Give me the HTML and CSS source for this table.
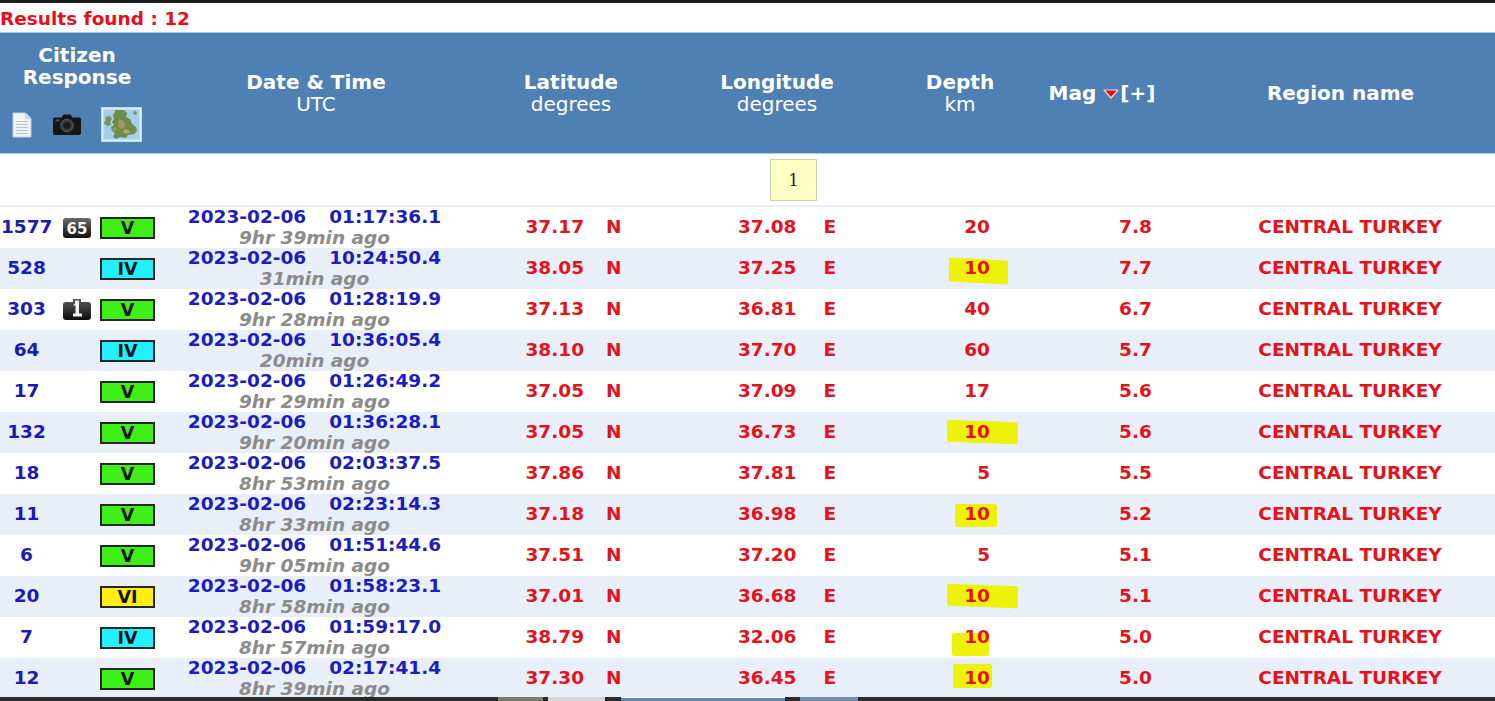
FILE: index.html
```html
<!DOCTYPE html>
<html lang="en">
<head>
<meta charset="utf-8">
<title>Results found : 12</title>
<link rel="stylesheet" href="styles.css">
</head>
<body>
<div class="topbar"></div>
<div class="results">Results found : 12</div>

<div class="thead grid">
  <div class="th th-citizen">
    <div class="th-title">Citizen<br>Response</div>
    <div class="th-icons">
      <svg class="ic-doc" width="20" height="26" viewBox="0 0 20 26"><path d="M1 1h12.5l5.5 5.5V25H1z" fill="#eef3f8" stroke="#c3d0dc"/><path d="M13.5 1v5.5H19" fill="#d3dde8" stroke="#c3d0dc"/><g stroke="#b6c3cf" stroke-width="1"><line x1="4" y1="9.5" x2="16" y2="9.5"/><line x1="4" y1="12.5" x2="16" y2="12.5"/><line x1="4" y1="15.5" x2="16" y2="15.5"/><line x1="4" y1="18.5" x2="16" y2="18.5"/><line x1="4" y1="21.5" x2="16" y2="21.5"/></g></svg>
      <svg class="ic-cam" width="28" height="21" viewBox="0 0 28 21"><path d="M8.5 3.5 10.5 0.5h7l2 3H26a2 2 0 0 1 2 2V19a2 2 0 0 1-2 2H2a2 2 0 0 1-2-2V5.5a2 2 0 0 1 2-2z" fill="#161616"/><circle cx="14" cy="11.5" r="6.2" fill="#3c3c3c" stroke="#5a5a5a"/><circle cx="14" cy="11.5" r="3.6" fill="#1c1c1c"/><rect x="2.5" y="5.5" width="4" height="2" fill="#4a4a4a"/></svg>
      <svg class="ic-map" width="41" height="35" viewBox="0 0 41 35"><rect x="0.5" y="0.5" width="40" height="34" fill="#dcedf8" stroke="#bcdcef"/><rect x="2.5" y="2.5" width="36" height="30" fill="#a3cfe9"/><path d="M14 3h9l3 3-1 4 4 2 2 5 4 3 1 4-3 3-6 1-2 3-6-1-4 2-3-2 2-4-3-2-1-4 3-2-2-3 2-3-1-4 2-3z" fill="#6f8b48"/><path d="M4 10l5-1 2 3-2 3 1 3-4 1-3-3 2-3z" fill="#7c9452"/><path d="M18 12l5 2 1 5-3 3-4-2 0-4z" fill="#a3975f"/><path d="M24 22l4 1 1 3-4 1-3-2z" fill="#b3a46d"/><path d="M12 20l4 1-1 3-4 0z" fill="#94915a"/><path d="M33 4l3 1-1 3-3-1z" fill="#7c9452"/></svg>
    </div>
  </div>
  <div class="th th-date"><b>Date &amp; Time</b><br>UTC</div>
  <div class="th th-lat"><b>Latitude</b><br>degrees</div>
  <div class="th th-lon"><b>Longitude</b><br>degrees</div>
  <div class="th th-depth"><b>Depth</b><br>km</div>
  <div class="th th-mag"><b>Mag</b> <svg class="ic-sort" width="16" height="10" viewBox="0 0 16 10"><path d="M1 1h14L8 9z" fill="#e0101c" stroke="#f4d4d8" stroke-width="1.2" stroke-linejoin="round"/></svg><b>[+]</b></div>
  <div class="th th-region"><b>Region name</b></div>
</div>

<div class="pager"><span class="page">1</span></div>

<div class="row grid">
  <div class="c-num">1577</div>
  <div class="c-icon"><svg width="28" height="20" viewBox="0 0 28 20"><defs><linearGradient id="g65" x1="0" y1="0" x2="0" y2="1"><stop offset="0" stop-color="#6a6a6a"/><stop offset="1" stop-color="#101010"/></linearGradient></defs><rect x="0" y="0" width="28" height="20" rx="3" fill="url(#g65)"/><text x="14" y="15.5" text-anchor="middle" font-family="DejaVu Sans" font-weight="bold" font-size="15" fill="#f4f4f4">65</text></svg></div>
  <div class="c-badge"><span class="badge b-v">V</span></div>
  <div class="c-date"><div class="dt"><span>2023-02-06</span><span class="tm">01:17:36.1</span></div><div class="ago">9hr 39min ago</div></div>
  <div class="c-lat">37.17<span class="hemi">N</span></div>
  <div class="c-lon">37.08<span class="hemi">E</span></div>
  <div class="c-depth"><span>20</span></div>
  <div class="c-mag">7.8</div>
  <div class="c-region">CENTRAL TURKEY</div>
</div>

<div class="row grid alt">
  <div class="c-num">528</div>
  <div class="c-icon"></div>
  <div class="c-badge"><span class="badge b-iv">IV</span></div>
  <div class="c-date"><div class="dt"><span>2023-02-06</span><span class="tm">10:24:50.4</span></div><div class="ago">31min ago</div></div>
  <div class="c-lat">38.05<span class="hemi">N</span></div>
  <div class="c-lon">37.25<span class="hemi">E</span></div>
  <div class="c-depth"><span class="hl hl-a">10</span></div>
  <div class="c-mag">7.7</div>
  <div class="c-region">CENTRAL TURKEY</div>
</div>

<div class="row grid">
  <div class="c-num">303</div>
  <div class="c-icon"><svg width="28" height="21" viewBox="0 0 28 21"><defs><linearGradient id="g1" x1="0" y1="0" x2="0" y2="1"><stop offset="0" stop-color="#5a5a5a"/><stop offset="1" stop-color="#0e0e0e"/></linearGradient></defs><path d="M3 3h7V0h8v3h7a3 3 0 0 1 3 3v12a3 3 0 0 1-3 3H3a3 3 0 0 1-3-3V6a3 3 0 0 1 3-3z" fill="url(#g1)"/><path d="M12 1.5h4v13h3v3h-9v-3h2.5V6.5H10l2-2z" fill="#f2f2f2"/></svg></div>
  <div class="c-badge"><span class="badge b-v">V</span></div>
  <div class="c-date"><div class="dt"><span>2023-02-06</span><span class="tm">01:28:19.9</span></div><div class="ago">9hr 28min ago</div></div>
  <div class="c-lat">37.13<span class="hemi">N</span></div>
  <div class="c-lon">36.81<span class="hemi">E</span></div>
  <div class="c-depth"><span>40</span></div>
  <div class="c-mag">6.7</div>
  <div class="c-region">CENTRAL TURKEY</div>
</div>

<div class="row grid alt">
  <div class="c-num">64</div>
  <div class="c-icon"></div>
  <div class="c-badge"><span class="badge b-iv">IV</span></div>
  <div class="c-date"><div class="dt"><span>2023-02-06</span><span class="tm">10:36:05.4</span></div><div class="ago">20min ago</div></div>
  <div class="c-lat">38.10<span class="hemi">N</span></div>
  <div class="c-lon">37.70<span class="hemi">E</span></div>
  <div class="c-depth"><span>60</span></div>
  <div class="c-mag">5.7</div>
  <div class="c-region">CENTRAL TURKEY</div>
</div>

<div class="row grid">
  <div class="c-num">17</div>
  <div class="c-icon"></div>
  <div class="c-badge"><span class="badge b-v">V</span></div>
  <div class="c-date"><div class="dt"><span>2023-02-06</span><span class="tm">01:26:49.2</span></div><div class="ago">9hr 29min ago</div></div>
  <div class="c-lat">37.05<span class="hemi">N</span></div>
  <div class="c-lon">37.09<span class="hemi">E</span></div>
  <div class="c-depth"><span>17</span></div>
  <div class="c-mag">5.6</div>
  <div class="c-region">CENTRAL TURKEY</div>
</div>

<div class="row grid alt">
  <div class="c-num">132</div>
  <div class="c-icon"></div>
  <div class="c-badge"><span class="badge b-v">V</span></div>
  <div class="c-date"><div class="dt"><span>2023-02-06</span><span class="tm">01:36:28.1</span></div><div class="ago">9hr 20min ago</div></div>
  <div class="c-lat">37.05<span class="hemi">N</span></div>
  <div class="c-lon">36.73<span class="hemi">E</span></div>
  <div class="c-depth"><span class="hl hl-b">10</span></div>
  <div class="c-mag">5.6</div>
  <div class="c-region">CENTRAL TURKEY</div>
</div>

<div class="row grid">
  <div class="c-num">18</div>
  <div class="c-icon"></div>
  <div class="c-badge"><span class="badge b-v">V</span></div>
  <div class="c-date"><div class="dt"><span>2023-02-06</span><span class="tm">02:03:37.5</span></div><div class="ago">8hr 53min ago</div></div>
  <div class="c-lat">37.86<span class="hemi">N</span></div>
  <div class="c-lon">37.81<span class="hemi">E</span></div>
  <div class="c-depth"><span>5</span></div>
  <div class="c-mag">5.5</div>
  <div class="c-region">CENTRAL TURKEY</div>
</div>

<div class="row grid alt">
  <div class="c-num">11</div>
  <div class="c-icon"></div>
  <div class="c-badge"><span class="badge b-v">V</span></div>
  <div class="c-date"><div class="dt"><span>2023-02-06</span><span class="tm">02:23:14.3</span></div><div class="ago">8hr 33min ago</div></div>
  <div class="c-lat">37.18<span class="hemi">N</span></div>
  <div class="c-lon">36.98<span class="hemi">E</span></div>
  <div class="c-depth"><span class="hl hl-c">10</span></div>
  <div class="c-mag">5.2</div>
  <div class="c-region">CENTRAL TURKEY</div>
</div>

<div class="row grid">
  <div class="c-num">6</div>
  <div class="c-icon"></div>
  <div class="c-badge"><span class="badge b-v">V</span></div>
  <div class="c-date"><div class="dt"><span>2023-02-06</span><span class="tm">01:51:44.6</span></div><div class="ago">9hr 05min ago</div></div>
  <div class="c-lat">37.51<span class="hemi">N</span></div>
  <div class="c-lon">37.20<span class="hemi">E</span></div>
  <div class="c-depth"><span>5</span></div>
  <div class="c-mag">5.1</div>
  <div class="c-region">CENTRAL TURKEY</div>
</div>

<div class="row grid alt">
  <div class="c-num">20</div>
  <div class="c-icon"></div>
  <div class="c-badge"><span class="badge b-vi">VI</span></div>
  <div class="c-date"><div class="dt"><span>2023-02-06</span><span class="tm">01:58:23.1</span></div><div class="ago">8hr 58min ago</div></div>
  <div class="c-lat">37.01<span class="hemi">N</span></div>
  <div class="c-lon">36.68<span class="hemi">E</span></div>
  <div class="c-depth"><span class="hl hl-b">10</span></div>
  <div class="c-mag">5.1</div>
  <div class="c-region">CENTRAL TURKEY</div>
</div>

<div class="row grid">
  <div class="c-num">7</div>
  <div class="c-icon"></div>
  <div class="c-badge"><span class="badge b-iv">IV</span></div>
  <div class="c-date"><div class="dt"><span>2023-02-06</span><span class="tm">01:59:17.0</span></div><div class="ago">8hr 57min ago</div></div>
  <div class="c-lat">38.79<span class="hemi">N</span></div>
  <div class="c-lon">32.06<span class="hemi">E</span></div>
  <div class="c-depth"><span class="hl hl-d">10</span></div>
  <div class="c-mag">5.0</div>
  <div class="c-region">CENTRAL TURKEY</div>
</div>

<div class="row grid alt">
  <div class="c-num">12</div>
  <div class="c-icon"></div>
  <div class="c-badge"><span class="badge b-v">V</span></div>
  <div class="c-date"><div class="dt"><span>2023-02-06</span><span class="tm">02:17:41.4</span></div><div class="ago">8hr 39min ago</div></div>
  <div class="c-lat">37.30<span class="hemi">N</span></div>
  <div class="c-lon">36.45<span class="hemi">E</span></div>
  <div class="c-depth"><span class="hl hl-e">10</span></div>
  <div class="c-mag">5.0</div>
  <div class="c-region">CENTRAL TURKEY</div>
</div>

<div class="strip">
  <span class="seg seg-1"></span>
  <span class="seg seg-2"></span>
  <span class="seg seg-3"></span>
  <span class="seg seg-4"></span>
</div>
</body>
</html>
```

FILE: styles.css
```css
html, body {
  margin: 0;
  padding: 0;
}

body {
  width: 1495px;
  height: 701px;
  overflow: hidden;
  position: relative;
  background: #ffffff;
  font-family: "DejaVu Sans", Verdana, sans-serif;
}

.topbar {
  height: 3px;
  background: #1c1c1c;
}

.results {
  height: 29px;
  box-sizing: border-box;
  padding-top: 3px;
  line-height: 26px;
  font-size: 18.5px;
  font-weight: bold;
  color: #e5101b;
  white-space: nowrap;
}

.grid {
  display: grid;
  grid-template-columns: 52px 46px 60px 312px 202px 210px 158px 138px 1fr;
}

/* ---------- header ---------- */
.thead {
  height: 120px;
  background: #4f80b3;
  border-top: 1px solid #a9cde6;
  border-bottom: 1px solid #a9cde6;
  color: #ffffff;
  font-size: 20px;
  line-height: 22px;
}

.th {
  text-align: center;
  align-self: center;
  white-space: nowrap;
}

.th b {
  font-weight: bold;
}

.th-citizen {
  grid-column: 1 / 4;
  align-self: start;
  padding-top: 11px;
}

.th-title {
  font-weight: bold;
  padding-right: 4px;
}

.th-icons {
  display: flex;
  align-items: center;
  gap: 20px;
  margin-top: 19px;
  padding-left: 12px;
  height: 35px;
}

.ic-cam {
  margin-left: 1px;
}

.th-date {
  padding-left: 4px;
}

.th-depth {
  padding-right: 2px;
}

.th-mag {
  display: flex;
  align-items: center;
  justify-content: center;
  padding-right: 14px;
}

.th-mag b:first-child {
  margin-right: 7px;
}

.ic-sort {
  margin-right: 1px;
  margin-top: 1px;
}

.th-region {
  padding-left: 8px;
}

/* ---------- pager ---------- */
.pager {
  height: 53px;
  box-sizing: border-box;
  padding-top: 5px;
  padding-left: 770px;
  border-bottom: 2px solid #e8eef5;
}

.page {
  display: flex;
  align-items: center;
  justify-content: center;
  width: 45px;
  height: 40px;
  background: #ffffc4;
  border: 1px solid #cfcfb4;
  font-family: "DejaVu Serif", "Liberation Serif", serif;
  font-size: 16px;
  color: #1a1a1a;
}

/* ---------- rows ---------- */
.row {
  height: 41px;
  align-items: center;
  font-size: 18.5px;
  line-height: 20.5px;
  font-weight: bold;
  white-space: nowrap;
  background: #ffffff;
}

.row.alt {
  background: #e9eff9;
}

.c-num {
  text-align: center;
  color: #1a1ab8;
  padding-left: 1px;
}

.c-icon {
  display: flex;
  align-items: center;
  padding-left: 11px;
}

.c-icon svg {
  display: block;
}

.c-badge {
  display: flex;
  align-items: center;
  padding-left: 2px;
}

.badge {
  display: flex;
  align-items: center;
  justify-content: center;
  width: 51px;
  height: 18px;
  border: 2px solid #262626;
  font-size: 17.5px;
  line-height: 18px;
  color: #151515;
  font-weight: bold;
}

.b-v {
  background: #3ff018;
}

.b-iv {
  background: #22f0ff;
}

.b-vi {
  background: #ffee11;
}

.c-date {
  text-align: center;
  padding-left: 1px;
}

.dt {
  color: #1c1cc0;
}

.dt .tm {
  margin-left: 23px;
}

.ago {
  color: #8b8b8b;
  font-style: italic;
}

.c-lat,
.c-lon,
.c-depth,
.c-mag,
.c-region {
  color: #e5121b;
}

.c-lat {
  text-align: center;
  padding-left: 5px;
}

.c-lon {
  text-align: center;
  padding-left: 20px;
}

.hemi {
  margin-left: 22px;
}

.c-lon .hemi {
  margin-left: 27px;
}

.c-depth {
  text-align: right;
  padding-right: 50px;
}

.c-mag {
  text-align: center;
  padding-left: 53px;
}

.c-region {
  text-align: center;
  padding-left: 27px;
}

/* hand-drawn marker highlights */
.hl {
  position: relative;
  z-index: 0;
  display: inline-block;
}

.hl::before {
  content: "";
  position: absolute;
  z-index: -1;
  background: #eef20a;
  border-radius: 2px;
}

.hl-a::before {
  left: -15px;
  right: -18px;
  top: 1px;
  bottom: -4px;
  transform: skewY(3deg);
}

.hl-b::before {
  left: -17px;
  right: -28px;
  top: -1px;
  bottom: 0px;
  transform: skewY(2deg);
}

.hl-c::before {
  left: -9px;
  right: -7px;
  top: 0px;
  bottom: -2px;
}

.hl-d::before {
  left: -12px;
  right: 1px;
  top: 6px;
  bottom: -8px;
}

.hl-e::before {
  left: -11px;
  right: -2px;
  top: -4px;
  bottom: 1px;
}

/* bottom screenshot strip */
.strip {
  position: absolute;
  left: 0;
  right: 0;
  bottom: 0;
  height: 4px;
  background: #2a2a2a;
  display: flex;
  padding-left: 498px;
}

.seg {
  display: block;
  height: 4px;
}

.seg-1 {
  width: 45px;
  background: #7b7b6c;
}

.seg-2 {
  width: 57px;
  margin-left: 5px;
  background: #d6d6d6;
}

.seg-3 {
  width: 164px;
  margin-left: 16px;
  background: #5a87b6;
  border-top: 1px solid #ffffff;
  box-sizing: border-box;
}

.seg-4 {
  width: 58px;
  margin-left: 15px;
  background: #7390b0;
}
```
